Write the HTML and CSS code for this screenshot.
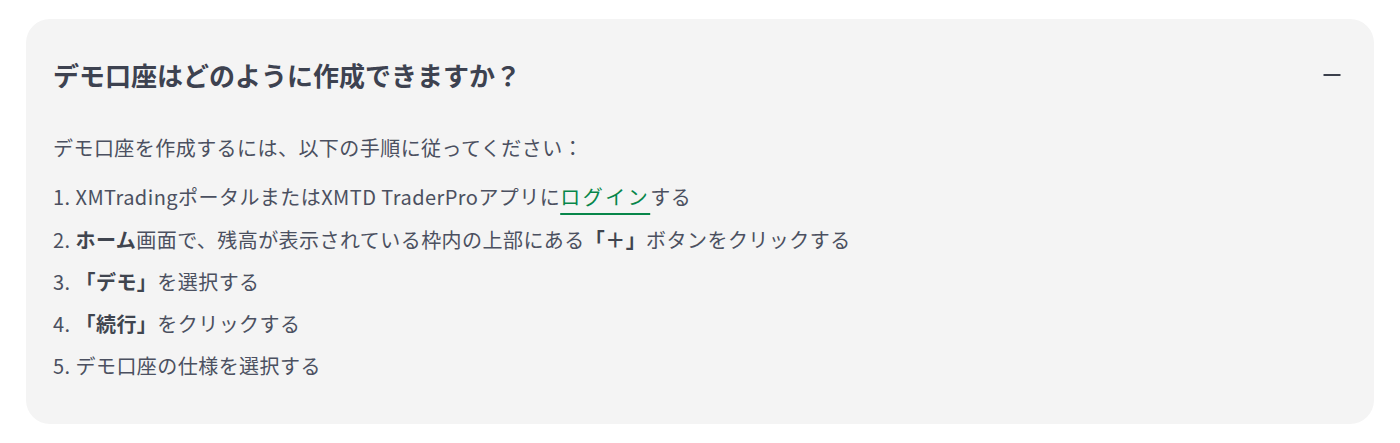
FILE: index.html
```html
<!DOCTYPE html>
<html lang="ja">
<head>
    <meta charset="UTF-8">
    <meta name="viewport" content="width=device-width, initial-scale=1.0">
    <link rel="stylesheet" href="styles.css">
</head>
<body>
    <div class="faq-item open">
        <div class="faq-header">
            <h3 class="faq-title">デモ口座はどのように作成できますか？</h3>
            <span class="faq-toggle">
                <svg width="18" height="18" viewBox="0 0 18 18">
                    <line x1="0.5" y1="9" x2="17.5" y2="9" stroke="#3b404c" stroke-width="2"/>
                </svg>
            </span>
        </div>

        <div class="faq-answer">
            <p>デモ口座を作成するには、以下の手順に従ってください：</p>
            <ol class="steps">
                <li>1. XMTradingポータルまたはXMTD TraderProアプリに<a href="#" class="link">ログイン</a>する</li>
                <li>2. <b>ホーム</b>画面で、残高が表示されている枠内の上部にある<b>「＋」</b>ボタンをクリックする</li>
                <li>3. <b>「デモ」</b>を選択する</li>
                <li>4. <b>「続行」</b>をクリックする</li>
                <li>5. デモ口座の仕様を選択する</li>
            </ol>
        </div>
    </div>
</body>
</html>
```

FILE: styles.css
```css
body {
    margin: 0;
    padding: 19px 26px;
    background-color: #fff;
    font-family: "Noto Sans CJK JP", "Noto Sans", sans-serif;
}

.faq-item {
    background-color: #f4f4f4;
    border-radius: 24px;
    padding: 32px 33px 36px 27px;
}

.faq-header {
    display: flex;
    align-items: center;
    justify-content: space-between;
    cursor: pointer;
}

.faq-title {
    margin: 0;
    font-size: 26px;
    line-height: 48px;
    font-weight: 700;
    color: #3d4250;
}

.faq-toggle {
    display: flex;
    width: 18px;
    height: 18px;
}

.faq-answer {
    margin-top: 28px;
    font-size: 20px;
    line-height: 42.3px;
    letter-spacing: 0.45px;
    color: #4b5060;
}

.faq-answer p {
    margin: 0;
}

.steps {
    list-style: none;
    margin: 7px 0 0;
    padding: 0;
}

.steps b {
    font-weight: 700;
    color: #40454f;
}

.link {
    color: #07864a;
    letter-spacing: 2.5px;
    text-decoration: underline;
    text-decoration-thickness: 2px;
    text-underline-offset: 8px;
}
```
